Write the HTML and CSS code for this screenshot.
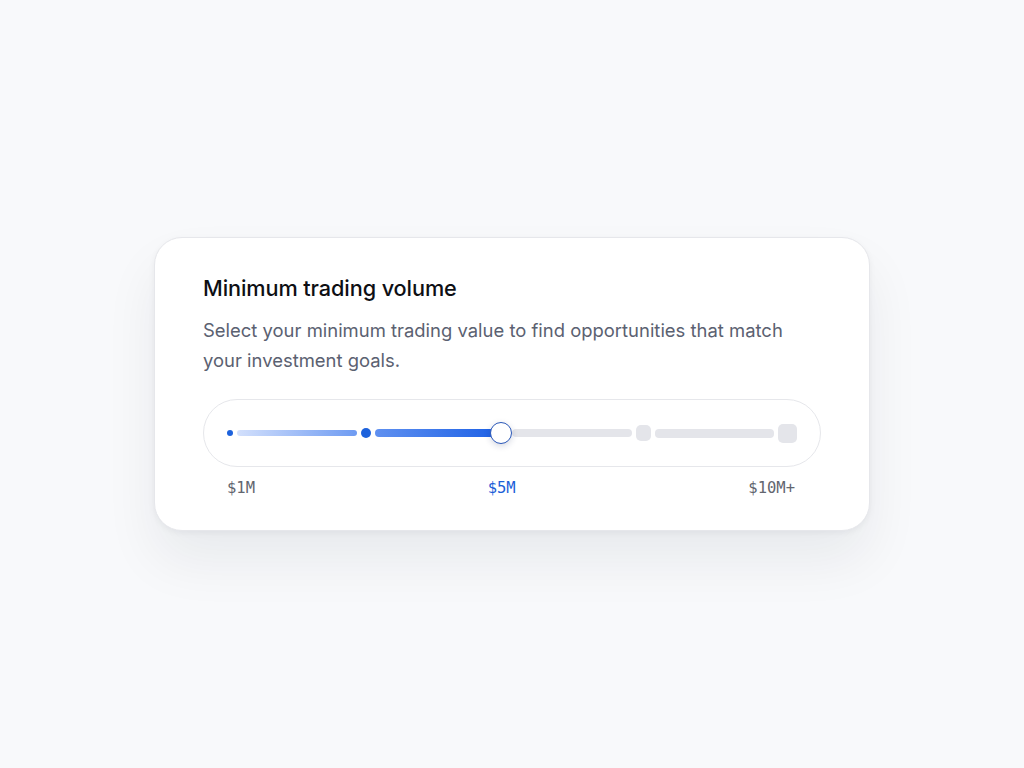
FILE: index.html
```html
<!DOCTYPE html>
<html lang="en">
<head>
<meta charset="utf-8">
<title>Minimum trading volume</title>
<link rel="stylesheet" href="styles.css">
</head>
<body>
<main class="stage">
  <section class="card">
    <h1 class="title">Minimum trading volume</h1>
    <p class="desc">Select your minimum trading value to find opportunities that match your investment goals.</p>
    <div class="slider">
      <span class="dot dot-sm"></span>
      <span class="bar bar-1"></span>
      <span class="dot dot-md"></span>
      <span class="bar bar-2"></span>
      <span class="thumb"></span>
      <span class="bar bar-3"></span>
      <span class="sq sq-sm"></span>
      <span class="bar bar-4"></span>
      <span class="sq sq-lg"></span>
    </div>
    <div class="labels">
      <span class="label">$1M</span>
      <span class="label label-active">$5M</span>
      <span class="label">$10M+</span>
    </div>
  </section>
</main>
</body>
</html>
```

FILE: styles.css
```css
* { box-sizing: border-box; }
html, body { margin: 0; padding: 0; }
body {
  background: #f8f9fb;
  font-family: "Inter", "Noto Sans", sans-serif;
}
.stage {
  min-height: 768px;
  display: flex;
  align-items: center;
  justify-content: center;
}
.card {
  width: 716px;
  background: #ffffff;
  border: 1px solid #e6e7eb;
  border-radius: 28px;
  padding: 35px 48px 31px;
  box-shadow: 0 2px 6px rgba(16, 24, 40, 0.05), 0 30px 54px rgba(16, 24, 40, 0.065);
}
.title {
  margin: 0;
  font-size: 21.7px;
  line-height: 30px;
  font-weight: 500;
  color: #0e0f14;
  letter-spacing: -0.1px;
}
.desc {
  margin: 12px 0 0;
  font-size: 18.45px;
  line-height: 30px;
  color: #5b6171;
}
.slider {
  margin-top: 24px;
  height: 68px;
  border: 1px solid #e6e7eb;
  border-radius: 34px;
  padding: 0 23px;
  display: flex;
  align-items: center;
  gap: 4px;
}
.dot { border-radius: 50%; background: #1d62dc; flex: none; }
.dot-sm { width: 6px; height: 6px; }
.dot-md { width: 10px; height: 10px; }
.bar { flex: 1; border-radius: 4px; }
.bar-1 { height: 6px; background: linear-gradient(90deg, #d3e0fc, #6e9bf2); }
.bar-2 { height: 8px; background: linear-gradient(90deg, #5f90f0, #1f62e6); margin-right: -8px; }
.thumb {
  position: relative;
  flex: none;
  width: 22px;
  height: 22px;
  border-radius: 50%;
  background: #ffffff;
  border: 1.5px solid #2b58b8;
  box-shadow: 0 2px 6px rgba(20, 40, 90, 0.18);
}
.bar-3 { height: 8px; background: #e4e5ea; margin-left: -4px; }
.bar-4 { height: 9px; background: #e4e5ea; }
.sq { flex: none; background: #e4e5ea; }
.sq-sm { width: 15px; height: 16px; border-radius: 5px; }
.sq-lg { width: 19px; height: 19px; border-radius: 5px; }
.labels {
  margin-top: 10px;
  padding: 0 26px 0 24px;
  display: flex;
  justify-content: space-between;
}
.label {
  font-family: "DejaVu Sans Mono", "Liberation Mono", monospace;
  font-size: 15.5px;
  line-height: 22px;
  color: #62666f;
}
.label-active { color: #1c5fd8; }
```
